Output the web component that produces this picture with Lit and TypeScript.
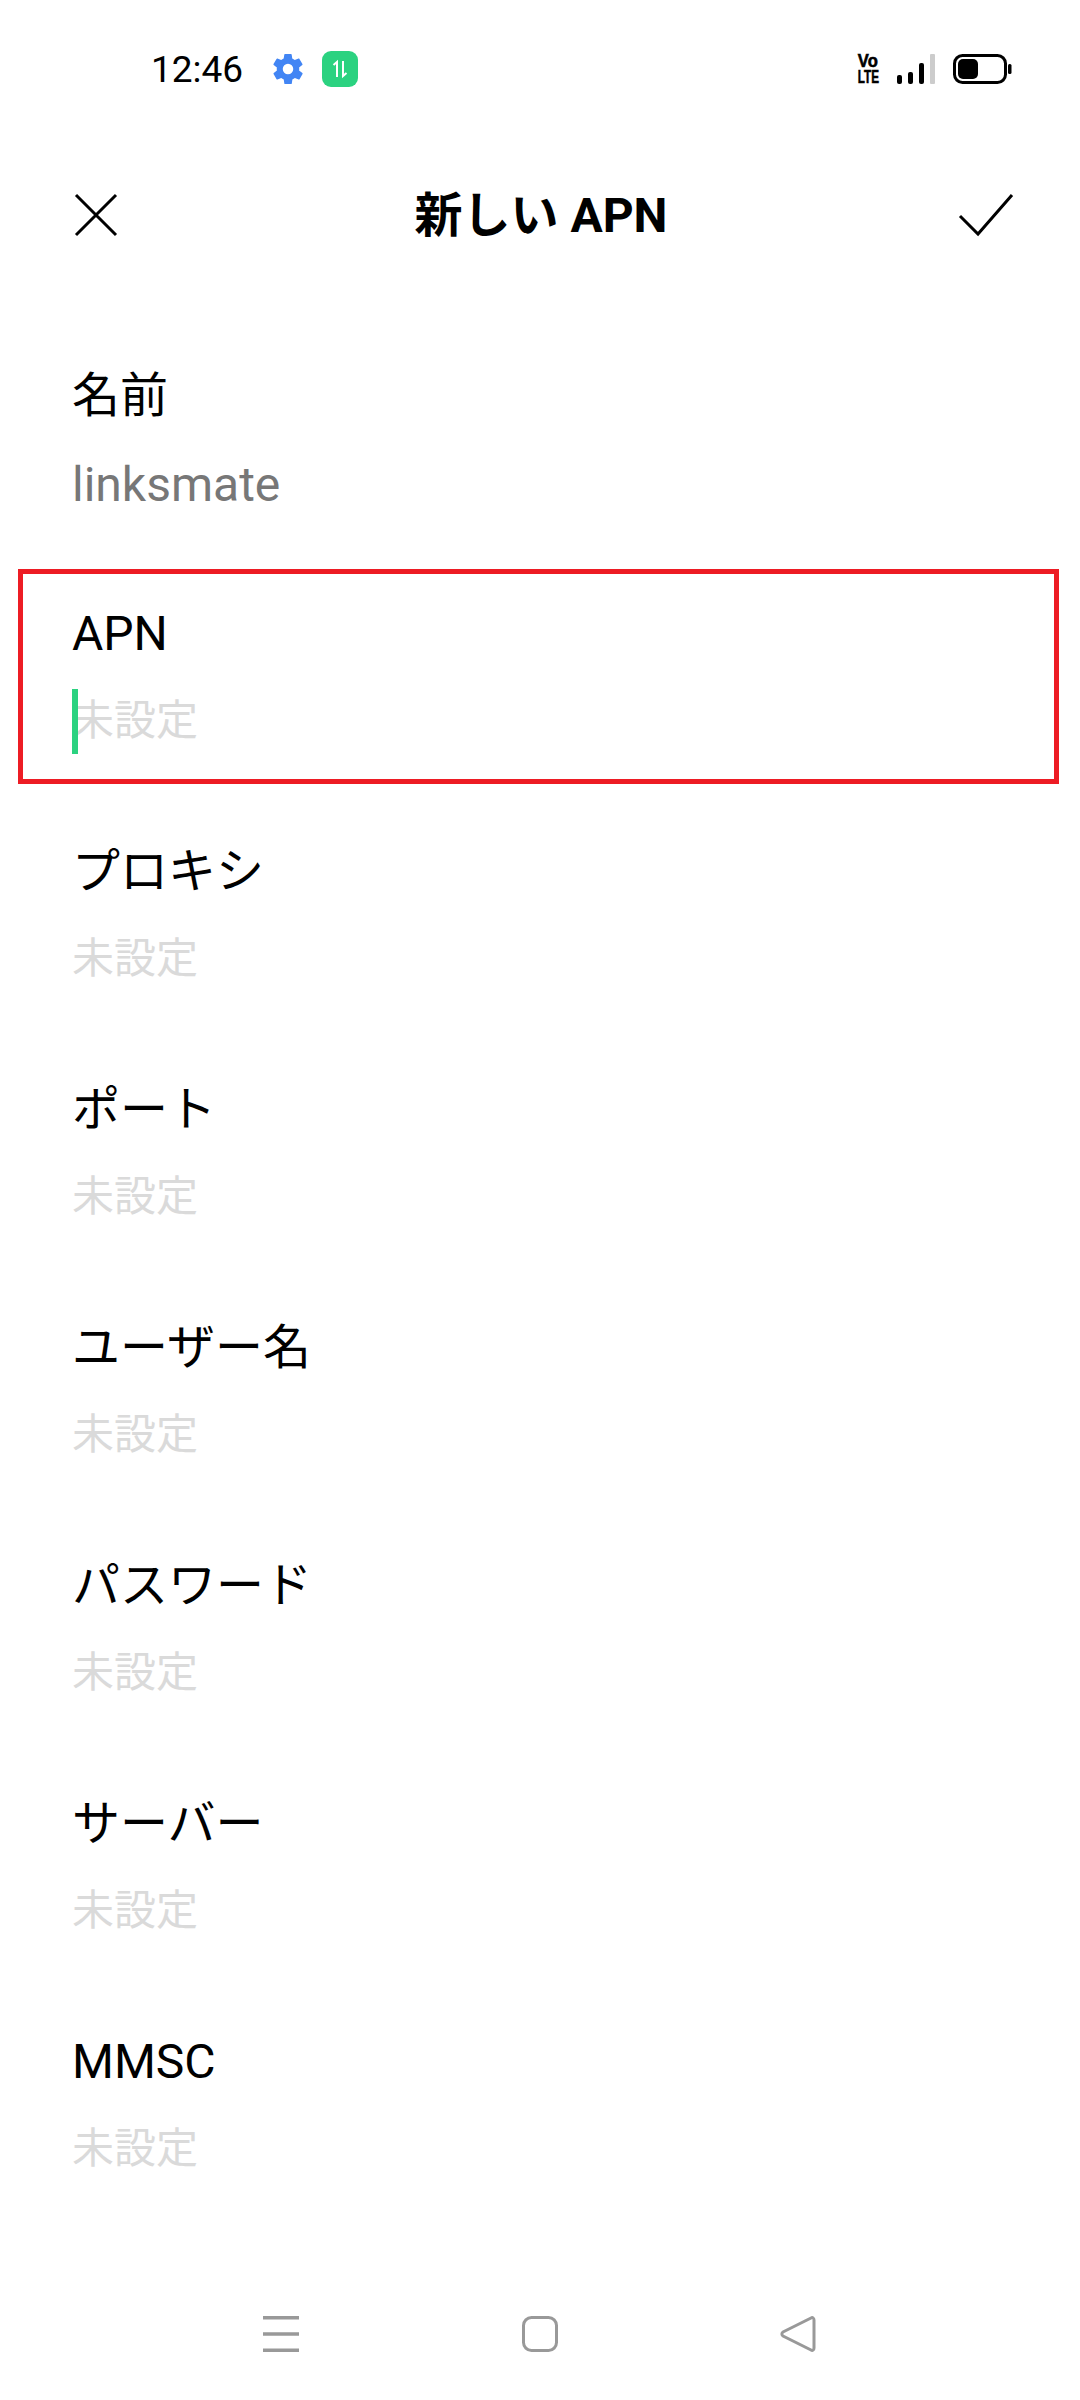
import { LitElement, html, css, svg } from 'lit';
import { customElement } from 'lit/decorators.js';

const FIELDS = [
  { label: '名前', value: 'linksmate' },
  { label: 'APN', focused: true },
  { label: 'プロキシ' },
  { label: 'ポート' },
  { label: 'ユーザー名' },
  { label: 'パスワード' },
  { label: 'サーバー' },
  { label: 'MMSC' },
];

const gear = svg`<svg class="gear" width="36" height="36" viewBox="0 0 24 24"><path fill="#4285f4" d="M19.4 13c.04-.32.1-.66.1-1s-.05-.68-.1-1l2.1-1.65c.2-.15.25-.42.12-.64l-2-3.46c-.12-.22-.39-.3-.61-.22l-2.49 1c-.52-.4-1.08-.73-1.69-.98l-.38-2.65A.49.49 0 0 0 14 2h-4c-.25 0-.46.18-.49.42l-.38 2.65c-.61.25-1.17.59-1.69.98l-2.49-1a.5.5 0 0 0-.61.22l-2 3.46c-.13.22-.07.49.12.64L4.6 11c-.04.32-.1.66-.1 1s.06.68.1 1l-2.1 1.65c-.2.15-.25.42-.12.64l2 3.46c.12.22.39.3.61.22l2.49-1c.52.4 1.08.73 1.69.98l.38 2.65c.03.24.24.42.49.42h4c.25 0 .46-.18.49-.42l.38-2.65c.61-.25 1.17-.59 1.69-.98l2.49 1c.23.09.49 0 .61-.22l2-3.46c.12-.22.07-.49-.12-.64L19.4 13zM12 15.5a3.5 3.5 0 1 1 0-7 3.5 3.5 0 0 1 0 7z"/></svg>`;

const dataBadge = svg`<svg width="36" height="36" viewBox="0 0 36 36"><rect width="36" height="36" rx="9" fill="#2bd280"/><path d="M15 26V11l-3.500 3M21 10v15l3.500-3" fill="none" stroke="#fff" stroke-width="2"/></svg>`;

const signal = svg`<svg width="38" height="30" viewBox="0 0 38 30"><rect x="0" y="21" width="5" height="9" rx="2" fill="#000"/><rect x="11" y="18" width="5" height="12" rx="2" fill="#000"/><rect x="22" y="9" width="5" height="21" rx="2" fill="#000"/><rect x="33" y="0" width="5" height="30" rx="1" fill="#ccc"/></svg>`;

const battery = svg`<svg width="59" height="30" viewBox="0 0 59 30"><rect x="1.500" y="1.500" width="51" height="27" rx="8" fill="none" stroke="#000" stroke-width="3"/><rect x="5" y="5" width="20" height="20" rx="5" fill="#000"/><rect x="55" y="10" width="3.500" height="10" rx="1.500" fill="#000"/></svg>`;

const closeIcon = svg`<svg width="44" height="44" viewBox="0 0 44 44"><path d="M2 2l40 40M42 2L2 42" fill="none" stroke="#000" stroke-width="3"/></svg>`;

const checkIcon = svg`<svg width="56" height="44" viewBox="0 0 56 44"><path d="M2 23l18 18L54 2" fill="none" stroke="#000" stroke-width="3"/></svg>`;

const menuIcon = svg`<svg width="36" height="36" viewBox="0 0 36 36"><path d="M0 1.750h36M0 18h36M0 34.250h36" fill="none" stroke="#999" stroke-width="3.500"/></svg>`;

const homeIcon = svg`<svg width="36" height="36" viewBox="0 0 36 36"><rect x="1.500" y="1.500" width="33" height="33" rx="8" fill="none" stroke="#999" stroke-width="3"/></svg>`;

const backIcon = svg`<svg width="36" height="36" viewBox="0 0 36 36"><path d="M34 4v28c0 2-1.500 3-3 2L3 20c-1.500-1-1.500-3 0-4L31 2c1.500-1 3 0 3 2z" fill="none" stroke="#999" stroke-width="3"/></svg>`;

@customElement('app-root')
export class AppRoot extends LitElement {
  static styles = css`
    :host {
      display: flex;
      flex-direction: column;
      width: 1080px;
      height: 2400px;
      background: #fff;
      color: #000;
      font-family: Roboto, 'Noto Sans CJK JP', sans-serif;
      overflow: hidden;
    }
    .status {
      height: 138px;
      flex: none;
      padding: 0 68px 0 151px;
      display: flex;
      align-items: center;
      box-sizing: border-box;
    }
    .time {
      font-size: 37px;
      width: 119px;
    }
    .gear { margin-right: 16px; }
    .status-right {
      margin-left: auto;
      display: flex;
      align-items: center;
    }
    .volte {
      width: 22px;
      display: flex;
      flex-direction: column;
      align-items: center;
      font-family: 'Liberation Sans', sans-serif;
      font-size: 18px;
      font-weight: 700;
      line-height: 16px;
      margin-right: 18px;
      white-space: nowrap;
      -webkit-text-stroke: 0.6px #000;
    }
    .volte span:first-child { transform: scaleX(0.92); }
    .volte span:last-child { transform: scaleX(0.65); }
    .status-right svg:last-child { margin-left: 18px; }
    .toolbar {
      height: 154px;
      flex: none;
      padding: 0 66px 0 74px;
      display: flex;
      align-items: center;
      justify-content: space-between;
    }
    .title {
      font-size: 48px;
      font-weight: 700;
      white-space: nowrap;
      padding: 0 0 8px 6px;
    }
    .fields {
      display: flex;
      flex-direction: column;
      padding-top: 66px;
    }
    .field {
      position: relative;
      height: 238px;
      padding: 0 72px;
      box-sizing: border-box;
    }
    .label {
      font-size: 48px;
      height: 97px;
      line-height: 76px;
      white-space: nowrap;
    }
    .value {
      font-size: 48px;
      line-height: 60px;
      color: #777;
    }
    .hint {
      font-size: 42px;
      line-height: 56px;
      color: #dadada;
    }
    .caret {
      position: absolute;
      left: 72px;
      top: 93px;
      width: 6px;
      height: 65px;
      background: #2bd280;
    }
    .focused::after {
      content: '';
      position: absolute;
      left: 18px;
      right: 21px;
      top: -27px;
      height: 215px;
      border: 5px solid #ed1c24;
      box-sizing: border-box;
    }
    .nav {
      margin-top: auto;
      flex: none;
      display: flex;
      justify-content: space-between;
      padding: 0 264px 48px 263px;
    }
  `;

  render() {
    return html`
      <div class="status">
        <span class="time">12:46</span>
        ${gear}${dataBadge}
        <div class="status-right">
          <div class="volte"><span>Vo</span><span>LTE</span></div>
          ${signal}${battery}
        </div>
      </div>
      <div class="toolbar">
        ${closeIcon}
        <span class="title">新しい APN</span>
        ${checkIcon}
      </div>
      <div class="fields">
        ${FIELDS.map(
          (f) => html`
            <div class="field ${f.focused ? 'focused' : ''}">
              <div class="label">${f.label}</div>
              ${f.focused ? html`<span class="caret"></span>` : ''}
              ${f.value
                ? html`<div class="value">${f.value}</div>`
                : html`<div class="hint">未設定</div>`}
            </div>
          `,
        )}
      </div>
      <div class="nav">${menuIcon}${homeIcon}${backIcon}</div>
    `;
  }
}
